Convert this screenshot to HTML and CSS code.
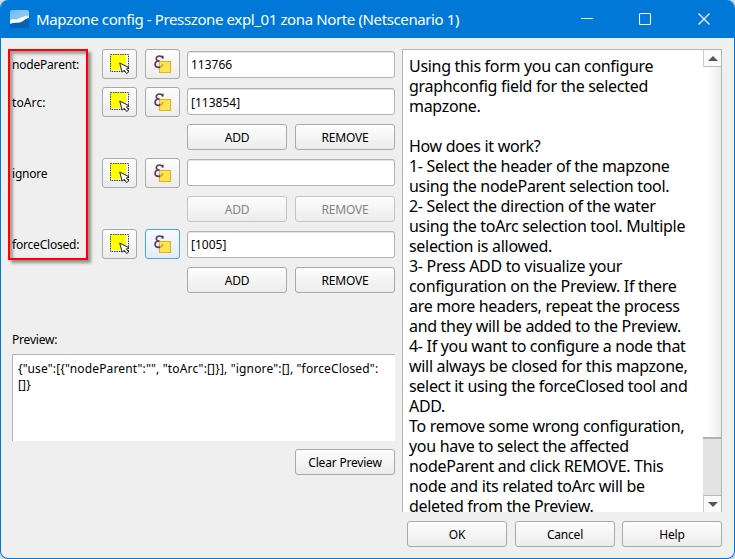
FILE: index.html
```html
<!DOCTYPE html>
<html lang="en">
<head>
<meta charset="utf-8">
<title>Mapzone config</title>
<link rel="stylesheet" href="styles.css">
</head>
<body>
<svg class="defs" width="0" height="0">
  <defs>
    <linearGradient id="sky" x1="0" y1="0" x2="1" y2="1"><stop offset="0" stop-color="#6db9ec"/><stop offset="1" stop-color="#a5d3f3"/></linearGradient>
    <symbol id="select" viewBox="0 0 20 20">
      <rect x="0" y="0" width="16" height="16" fill="#ffff00"/>
      <rect x=".5" y=".5" width="18" height="17" fill="none" stroke="#333" stroke-dasharray="1.4 1"/>
      <path d="M9.700 9l2.500 9.200 2-2 2.400 3.300 2.100-1.500-2.300-3.200 2.400-1.200z" fill="#fff" stroke="#222" stroke-width="1"/>
    </symbol>
    <symbol id="expression" viewBox="0 0 18 18">
      <rect x="5.500" y="6.500" width="11" height="11" fill="#ffe44f" stroke="#dcb52c" stroke-width="1.2"/>
      <path d="M8.800 3.600C8.300 1.700 7 1 5.500 1 3.400 1 2.200 2.200 2.300 3.700 2.400 5.200 3.600 6 5.600 6 2.900 6 1.100 7.300 1.100 9.300c0 2 1.500 3.100 3.700 3.100 2.200 0 3.700-1.200 4-3.200M8.800.8v2.800" fill="none" stroke="#5a3a66" stroke-width="1.700"/>
      <path d="M6 7h10v10H6z" fill="#ffe44f" opacity=".65"/>
    </symbol>
  </defs>
</svg>
<div class="window">
  <header class="titlebar">
    <svg class="logo" viewBox="0 0 19 18"><rect width="19" height="18" rx="2" fill="#0862b4"/><path d="M0 10V2q0-2 2-2h15q2 0 2 2v5L0 12z" fill="url(#sky)"/><path d="M0 10c3-1.500 5 .3 8-1s6-3.500 11-2.500v1.500c-4 .3-6 4-9.500 4.500S4 12 0 14z" fill="#fff"/></svg>
    <h1>Mapzone config - Presszone expl_01 zona Norte (Netscenario 1)</h1>
    <svg class="controls" viewBox="0 0 130 14" fill="none" stroke="#fff" stroke-width="1.100"><path d="M0 6.500h12M117.500 1.500l11 11m0-11l-11 11"/><rect x="58.500" y="1.500" width="11" height="11" rx="1"/></svg>
  </header>
  <main>
    <section class="form">
      <div class="labels">
        <span>nodeParent:</span><span class="arc">toArc:</span><span>ignore</span><span>forceClosed:</span>
        <i class="highlight"></i>
      </div>
      <div class="fields">
        <div class="row low"><button class="tool"><svg class="sel"><use href="#select"/></svg></button><button class="tool"><svg class="exp"><use href="#expression"/></svg></button><div class="input">113766</div></div>
        <div class="row"><button class="tool"><svg class="sel"><use href="#select"/></svg></button><button class="tool"><svg class="exp"><use href="#expression"/></svg></button><div class="input">[113854]</div></div>
        <div class="actions"><button>ADD</button><button>REMOVE</button></div>
        <div class="row"><button class="tool"><svg class="sel"><use href="#select"/></svg></button><button class="tool"><svg class="exp"><use href="#expression"/></svg></button><div class="input"></div></div>
        <div class="actions"><button disabled>ADD</button><button disabled>REMOVE</button></div>
        <div class="row low"><button class="tool"><svg class="sel"><use href="#select"/></svg></button><button class="tool focus"><svg class="exp"><use href="#expression"/></svg></button><div class="input">[1005]</div></div>
        <div class="actions"><button>ADD</button><button>REMOVE</button></div>
      </div>
      <div class="preview-label">Preview:</div>
      <div class="preview">{"use":[{"nodeParent":"", "toArc":[]}], "ignore":[], "forceClosed":<br>[]}</div>
      <button class="clear">Clear Preview</button>
    </section>
    <section class="side">
      <div class="help">
        <div class="text">Using this form you can configure<br>graphconfig field for the selected<br>mapzone.<br><br>How does it work?<br>1- Select the header of the mapzone<br>using the nodeParent selection tool.<br>2- Select the direction of the water<br>using the toArc selection tool. Multiple<br>selection is allowed.<br>3- Press ADD to visualize your<br>configuration on the Preview. If there<br>are more headers, repeat the process<br>and they will be added to the Preview.<br>4- If you want to configure a node that<br>will always be closed for this mapzone,<br>select it using the forceClosed tool and<br>ADD.<br>To remove some wrong configuration,<br>you have to select the affected<br>nodeParent and click REMOVE. This<br>node and its related toArc will be<br>deleted from the Preview.</div>
        <div class="scroll"><div class="arrow up"></div><div class="thumb"></div><div class="arrow down"></div></div>
      </div>
      <footer><button>OK</button><button>Cancel</button><button>Help</button></footer>
    </section>
  </main>
</div>
</body>
</html>
```
FILE: styles.css
```css
* { box-sizing: border-box; }
body { margin: 0; width: 735px; height: 559px; overflow: hidden; background: #d5dadd; color: #000; font: 12px/16px "Noto Sans", sans-serif; letter-spacing: -.2px; }
.defs { position: absolute; }
.window { width: 735px; height: 559px; background: #efefef; border: 1px solid #0078d7; border-top: 0; border-radius: 8px; overflow: hidden; }
.titlebar { height: 38px; background: #0078d7; display: flex; align-items: center; padding: 0 23px 0 9px; color: #fff; }
.logo { width: 19px; height: 18px; margin-right: 7px; }
h1 { margin: 0; font-size: 15px; font-weight: 400; line-height: 20px; white-space: nowrap; letter-spacing: -.38px; flex: 1; }
.controls { width: 130px; height: 14px; }
main { display: flex; padding: 11px 0 0 11px; }
.form { width: 383px; display: grid; grid-template-columns: 90px 293px; grid-template-rows: 244px 74px 82px 26px; align-content: start; margin-right: 7px; }
.labels { position: relative; display: grid; grid-template-rows: 38px 71px 71px 30px; align-content: start; line-height: 31px; white-space: nowrap; }
.arc { letter-spacing: .1px; }
.highlight { position: absolute; left: -4px; top: 0; width: 80px; height: 211px; border: 2px solid #f00; box-shadow: 3px 3px 3px #0006, inset 3px 3px 3px #0005; }
.fields { display: grid; grid-template-rows: 38px 37px 34px 38px 33px 38px 26px; }
.row { display: flex; align-items: flex-start; }
button { font: inherit; letter-spacing: inherit; color: #000; height: 26px; width: 100px; padding: 1px 0 0; border: 1px solid #aaa; border-radius: 3px; background: linear-gradient(#fdfdfd, #ececec); white-space: nowrap; }
button:disabled { color: #858585; border-color: #c4c4c4; }
.tool { width: 35px; height: 30px; flex: none; margin-right: 8px; display: flex; align-items: flex-start; padding: 4px 0 0 7px; }
.tool + .tool { margin-right: 7px; }
.sel { width: 20px; height: 20px; }
.exp { width: 18px; height: 18px; margin: 1px 0 0 1px; }
.focus { border-color: #4aa5ee; background: linear-gradient(#f7fbff, #e4ecf4); }
.input { width: 208px; height: 27px; margin-top: 1px; padding: 0 3px; border: 1px solid #b2b2b2; border-radius: 3px; background: #fff; box-shadow: inset 0 1px #e4e4e4; line-height: 27px; letter-spacing: 0; }
.low .input { margin-top: 2px; line-height: 26px; }
.actions { display: flex; gap: 8px; padding-left: 85px; }
.preview-label, .preview { grid-column: 1 / 3; }
.preview-label { padding-top: 39px; }
.preview { margin-top: -13px; width: 383px; height: 87px; background: #fff; border: solid #b5b5b5; border-width: 1px 0 0 1px; padding: 6px 5px; white-space: nowrap; letter-spacing: .16px; }
.clear { grid-column: 2; justify-self: end; }
.side { width: 320px; }
.help { height: 463px; border: 1px solid #b5b5b5; border-bottom: 0; background: #fff; display: flex; overflow: hidden; }
.text { flex: 1; padding: 6px 0 0 6px; font-size: 16px; line-height: 20px; letter-spacing: -.31px; white-space: nowrap; }
.scroll { width: 18px; display: flex; flex-direction: column; background: #e3e3e3; }
.arrow { height: 17px; flex: none; background: #fafafa; display: grid; place-items: center; border-left: 1px solid #ccc; }
.up { border-bottom: 1px solid #bbb; }
.down { border-top: 1px solid #bbb; margin-top: auto; }
.arrow::after { content: ""; border: 5px solid transparent; }
.up::after { border-top: 0; border-bottom-color: #555; }
.down::after { border-bottom: 0; border-top-color: #555; }
.thumb { height: 372px; background: linear-gradient(90deg, #fff 20%, #ededed); border-bottom: 2px solid #b2b2b2; }
footer { display: flex; gap: 8px; padding: 9px 0 0 5px; }
footer button { flex: none; }
footer button:last-child { margin-left: -1px; }
```
